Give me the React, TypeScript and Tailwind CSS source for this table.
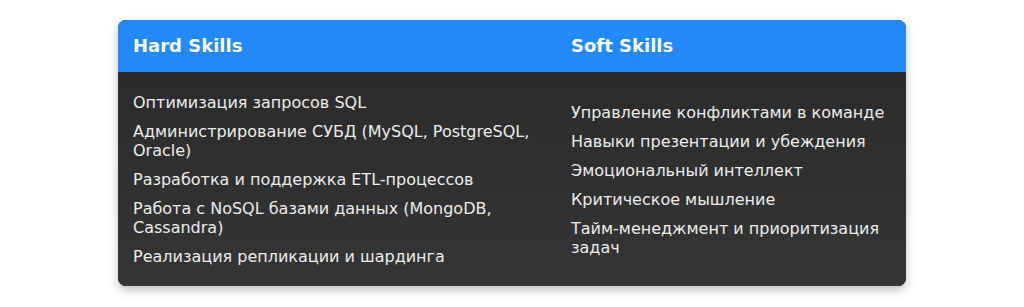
import React from "react";

const hard = [
  "Оптимизация запросов SQL",
  "Администрирование СУБД (MySQL, PostgreSQL, Oracle)",
  "Разработка и поддержка ETL-процессов",
  "Работа с NoSQL базами данных (MongoDB, Cassandra)",
  "Реализация репликации и шардинга",
];
const soft = [
  "Управление конфликтами в команде",
  "Навыки презентации и убеждения",
  "Эмоциональный интеллект",
  "Критическое мышление",
  "Тайм-менеджмент и приоритизация задач",
];

function List({ items }: { items: string[] }) {
  return (
    <ul className="flex flex-col gap-[10px]">
      {items.map((t) => (
        <li key={t} className="leading-[19px]">
          {t}
        </li>
      ))}
    </ul>
  );
}

export default function App() {
  return (
    <div className="bg-white w-full min-h-[307px] pt-5" style={{ fontFamily: '"DejaVu Sans", sans-serif' }}>
      <div className="mx-auto w-[788px] rounded-lg overflow-hidden shadow-[0_4px_10px_rgba(0,0,0,0.25)] bg-[#2f2f2f]">
        <div className="flex bg-[#2189f8] h-[52px] pb-[2px] items-center text-white font-bold text-[18px]">
          <div className="w-[438px] px-[15px]">Hard Skills</div>
          <div className="flex-1 px-[15px]">Soft Skills</div>
        </div>
        <div className="flex items-center text-[#ececec] text-[16px] pt-[21px] pb-5 bg-gradient-to-b from-[#2b2b2b] to-[#353535]">
          <div className="w-[438px] px-[15px]">
            <List items={hard} />
          </div>
          <div className="flex-1 px-[15px]">
            <List items={soft} />
          </div>
        </div>
      </div>
    </div>
  );
}
